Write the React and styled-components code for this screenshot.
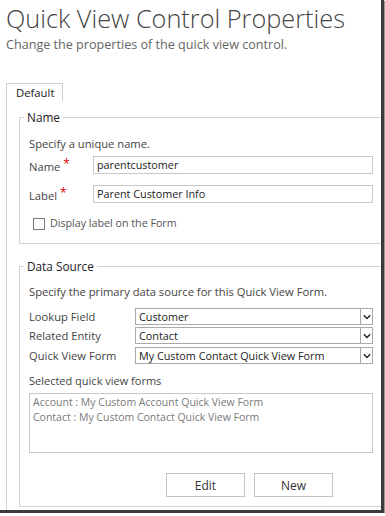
import React from 'react'
import styled, { createGlobalStyle } from 'styled-components'

const GlobalStyle = createGlobalStyle`
  html, body {
    margin: 0;
    padding: 0;
    background: #fff;
  }
  body {
    font-family: 'Open Sans', 'Noto Sans', sans-serif;
    font-size: 11.3px;
    color: #333;
  }
`

const Window = styled.div`
  width: 381px;
  height: 510px;
  border-right: 3px solid #3c3c3c;
  border-bottom: 3px solid #3c3c3c;
  box-shadow: 1px 1px 1px #9a9a9a;
  overflow: hidden;
  display: flex;
  flex-direction: column;
  background: #fff;
`

const Header = styled.div`
  padding: 2px 6px 0;
`

const Title = styled.h1`
  margin: 0;
  font-weight: 300;
  font-size: 25.3px;
  line-height: 32px;
  color: #444;
`

const Subtitle = styled.div`
  margin-top: 2px;
  font-size: 12.6px;
  line-height: 17px;
  color: #666;
`

const TabStrip = styled.div`
  display: flex;
  margin: 30px 0 0 6px;
`

const Tab = styled.div`
  width: 57px;
  height: 18px;
  box-sizing: border-box;
  border: 1px solid #cfcfcf;
  border-bottom: none;
  padding-left: 9px;
  font-size: 11.3px;
  line-height: 18px;
  color: #222;
`

const Panel = styled.div`
  flex: 1;
  margin-left: 6px;
  border-left: 1px solid #cfcfcf;
  padding: 8px 0 0 12px;
  display: flex;
  flex-direction: column;
  gap: 14px;
`

const Group = styled.fieldset`
  margin: 0 -1px 0 0;
  border: 1px solid #d2d2d2;
  padding: ${p => p.$pad};
  min-width: 0;
`

const Legend = styled.legend`
  padding: 0 3px;
  margin-left: -5px;
  font-size: 11.8px;
  line-height: 16px;
  color: #222;
`

const Hint = styled.div`
  font-size: 11.2px;
  line-height: 17px;
  color: #444;
`

const FieldRow = styled.div`
  display: flex;
  align-items: ${p => (p.$low ? 'flex-start' : 'center')};
  height: ${p => p.$h}px;
  margin-top: ${p => p.$top}px;
`

const FieldLabel = styled.div`
  width: ${p => p.$w}px;
  flex-shrink: 0;
  margin-top: ${p => (p.$low ? 2 : 0)}px;
  font-size: 11.2px;
  line-height: 17px;
  color: #444;
`

const Required = styled.span`
  color: #e00000;
  margin-left: 3px;
  font-size: 12px;
  position: relative;
  top: -3px;
`

const TextInput = styled.div`
  flex: 1;
  height: 18px;
  box-sizing: border-box;
  border: 1px solid #c8c8c8;
  padding-left: 3px;
  font-size: 10.8px;
  line-height: 16px;
  color: #222;
`

const CheckRow = styled.label`
  display: flex;
  align-items: center;
  gap: 5px;
  margin: 12px 0 0 4px;
  font-size: 10.7px;
  line-height: 17px;
  color: #555;
`

const Checkbox = styled.span`
  width: 12px;
  height: 12px;
  box-sizing: border-box;
  border: 1px solid #7a7a7a;
  background: #fff;
`

const SelectBox = styled.div`
  flex: 1;
  height: 17px;
  box-sizing: border-box;
  border: 1px solid #a9a9a9;
  display: flex;
  align-items: stretch;
`

const SelectValue = styled.div`
  flex: 1;
  padding-left: 3px;
  font-size: 10.8px;
  line-height: 15px;
  color: #222;
  white-space: nowrap;
  overflow: hidden;
`

const SelectArrow = styled.div`
  width: 11px;
  border-left: 1px solid #a9a9a9;
  display: flex;
  align-items: center;
  justify-content: center;
`

const SubLabel = styled.div`
  margin-top: 8px;
  font-size: 11px;
  line-height: 17px;
  color: #444;
`

const ListBox = styled.div`
  margin-top: 4px;
  height: 60px;
  box-sizing: border-box;
  border: 1px solid #c8c8c8;
  padding: 1px 3px;
`

const ListItem = styled.div`
  font-size: 10.5px;
  line-height: 15px;
  color: #7a7a7a;
`

const ButtonRow = styled.div`
  display: flex;
  gap: 9px;
  margin: 20px 0 0 137px;
`

const Button = styled.button`
  width: 79px;
  height: 24px;
  box-sizing: border-box;
  border: 1px solid #c4c4c4;
  background: #fff;
  font-family: inherit;
  font-size: 12px;
  color: #333;
  padding: 0;
`

const Chevron = () => (
  <svg width="8" height="6" viewBox="0 0 8 6">
    <polyline points="0.8,1.2 4,4.4 7.2,1.2" fill="none" stroke="#222" strokeWidth="1.4" />
  </svg>
)

const Select = ({ value }) => (
  <SelectBox>
    <SelectValue>{value}</SelectValue>
    <SelectArrow>
      <Chevron />
    </SelectArrow>
  </SelectBox>
)

const sources = [
  { label: 'Lookup Field', value: 'Customer', top: 8 },
  { label: 'Related Entity', value: 'Contact', top: 2 },
  { label: 'Quick View Form', value: 'My Custom Contact Quick View Form', top: 3 },
]

const forms = [
  'Account : My Custom Account Quick View Form',
  'Contact : My Custom Contact Quick View Form',
]

export default function App() {
  return (
    <>
      <GlobalStyle />
      <Window>
        <Header>
          <Title>Quick View Control Properties</Title>
          <Subtitle>Change the properties of the quick view control.</Subtitle>
        </Header>
        <TabStrip>
          <Tab>Default</Tab>
        </TabStrip>
        <Panel>
          <Group $pad="10px 8px 11px 9px">
            <Legend>Name</Legend>
            <Hint>Specify a unique name.</Hint>
            <FieldRow $top={4} $h={18} $low>
              <FieldLabel $w={64} $low>
                Name<Required>*</Required>
              </FieldLabel>
              <TextInput>parentcustomer</TextInput>
            </FieldRow>
            <FieldRow $top={11} $h={18} $low>
              <FieldLabel $w={64} $low>
                Label<Required>*</Required>
              </FieldLabel>
              <TextInput>Parent Customer Info</TextInput>
            </FieldRow>
            <CheckRow>
              <Checkbox />
              Display label on the Form
            </CheckRow>
          </Group>
          <Group $pad="9px 8px 9px 9px">
            <Legend>Data Source</Legend>
            <Hint>Specify the primary data source for this Quick View Form.</Hint>
            {sources.map(s => (
              <FieldRow key={s.label} $top={s.top} $h={17}>
                <FieldLabel $w={106}>{s.label}</FieldLabel>
                <Select value={s.value} />
              </FieldRow>
            ))}
            <SubLabel>Selected quick view forms</SubLabel>
            <ListBox>
              {forms.map(f => (
                <ListItem key={f}>{f}</ListItem>
              ))}
            </ListBox>
            <ButtonRow>
              <Button>Edit</Button>
              <Button>New</Button>
            </ButtonRow>
          </Group>
        </Panel>
      </Window>
    </>
  )
}
